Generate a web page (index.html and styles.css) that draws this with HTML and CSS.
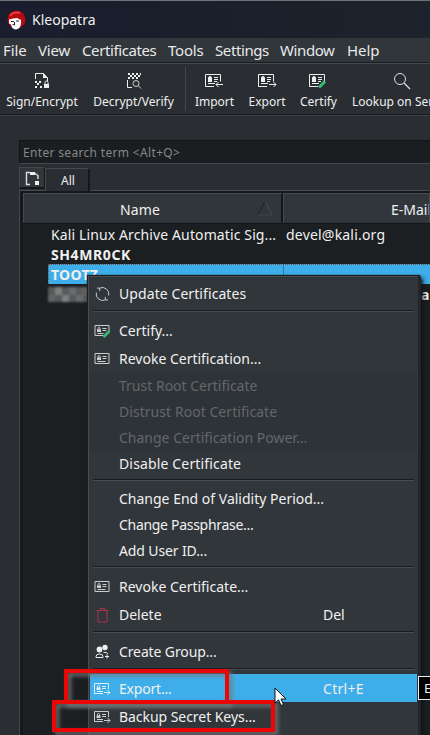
FILE: index.html
```html
<!DOCTYPE html>
<html lang="en">
<head>
<meta charset="utf-8">
<title>Kleopatra</title>
<link rel="stylesheet" href="styles.css">
</head>
<body>
<svg class="defs" width="0" height="0">
  <defs>
    <g id="card" fill="none" stroke="currentColor">
      <path d="M9 12.500H.5V.5h15v7M9 3.500h4M9 5.500h4M9 7.500h3M3 9.500h7"/>
      <path d="M3 5h4v3H3zM4 5V3h2v2" fill="currentColor" stroke="none"/>
      <path d="M3.500 5V4a1.500 1.500 0 0 1 3 0v1"/>
    </g>
    <g id="card-small" fill="none" stroke="currentColor">
      <path d="M.5.5h14v10H.5zM8 3.500h4M8 5.500h4M3 8.500h8"/>
      <path d="M2.500 4.500h4V7h-4z" fill="currentColor" stroke="none"/>
      <path d="M3.500 5V3.500a1 1 0 0 1 2 0V5"/>
    </g>
    <g id="card-open" fill="none" stroke="currentColor">
      <path d="M9 10.500H.5V.5h14V6M8 3.500h4M8 5.500h4M3 8.500h6"/>
      <path d="M2.500 4.500h4V7h-4z" fill="currentColor" stroke="none"/>
      <path d="M3.500 5V3.500a1 1 0 0 1 2 0V5"/>
    </g>
  </defs>
</svg>
<div class="window">
  <header class="titlebar">
    <svg width="20" height="20" viewBox="0 0 20 20"><circle cx="9.500" cy="9.500" r="9" fill="#b50b12"/><path d="M3 6Q6 1 13 3" stroke="#ee3a3c" stroke-width="2" fill="none"/><path d="M2 9.500q4-1.500 8-1.500l4 2v4q-1 5-5 5.500-4 0-5-5l-2-1z" fill="#fff"/><path d="M4 11.500h3m2-.5h3M7.500 12v3l-2-.5" stroke="#292023" fill="none"/></svg>
    <span class="title">Kleopatra</span>
  </header>
  <nav class="menubar"><span class="m1">File</span><span class="m2">View</span><span class="m3">Certificates</span><span class="m4">Tools</span><span class="m5">Settings</span><span class="m6">Window</span><span class="m7">Help</span></nav>
  <div class="toolbar">
    <div class="tool t1"><svg width="16" height="18" viewBox="0 0 16 18"><path d="M1.500 7V1.500h8L13.500 6v3" fill="none" stroke="#eee"/><path d="M9 1l5 5H9zM1 9h2v2H1zM5 9h2v2H5zM3 11h2v2H3zM1 14h2v2H1zM6 14h2v2H6zM10 12h5v4h-5z" fill="#eee"/><path d="M11 12v-1.500a1.500 1.500 0 0 1 3 0V12" stroke="#eee" fill="none"/></svg><span>Sign/Encrypt</span></div>
    <div class="tool t2"><svg width="16" height="18" viewBox="0 0 16 18"><path d="M2 1h2v2H2zM6 1h2v2H6zM10 1h2v2h-2zM14 1h1v2h-1zM4 3h2v2H4zM8 3h2v2H8zM12 3h2v2h-2zM2 5h2v2H2zM6 5h2v2H6zM10 5h2v2h-2z" fill="#eee"/><path d="M1.500 8v7.500H6" fill="none" stroke="#eee"/><circle cx="10" cy="11.500" r="3" fill="none" stroke="#ccc"/><path d="M12 13.500l3 3" stroke="#ccc"/></svg><span>Decrypt/Verify</span></div>
    <i class="divider"></i>
    <div class="tool t3"><svg width="19" height="18" viewBox="0 0 19 18"><use href="#card" y="2"/><path d="M18 12.500h-7M13.500 10L11 12.500l2.500 2.500" fill="none" stroke="#eee"/></svg><span>Import</span></div>
    <div class="tool t4"><svg width="19" height="18" viewBox="0 0 19 18"><use href="#card" y="2"/><path d="M11 12.500h7M15.500 10l2.500 2.500-2.500 2.500" fill="none" stroke="#eee"/></svg><span>Export</span></div>
    <div class="tool t5"><svg width="19" height="18" viewBox="0 0 19 18"><use href="#card" y="2"/><path d="M10 15.500l6-6" fill="none" stroke="#35bd78" stroke-width="3"/></svg><span>Certify</span></div>
    <div class="tool t6"><svg width="18" height="18" viewBox="0 0 18 18"><circle cx="7" cy="7" r="5.500" fill="none" stroke="#ddd"/><path d="M11 11l6 6" stroke="#ddd" stroke-width="1.200"/></svg><span>Lookup on Server</span></div>
  </div>
  <main>
    <div class="search">Enter search term &lt;Alt+Q&gt;</div>
    <div class="tabs"><div class="newtab"><svg width="16" height="16" viewBox="0 0 16 16"><path d="M5 13.500H1.500v-12H5M5 2.500h5l3 2V8" fill="none" stroke="#ddd" stroke-width="1.400"/><path d="M5 1h5v3H5zM10 10h4v4h-4z" fill="#eee"/></svg></div><div class="tab">All</div></div>
    <div class="table">
      <div class="thead"><div class="th name"><span>Name</span><svg width="16" height="16" viewBox="0 0 16 16"><path d="M8 1L1 15h14z" fill="none" stroke="#202427"/><path d="M1 15h14L8 1" fill="none" stroke="#4a4f53"/></svg></div><div class="th email"><span>E-Mail</span></div></div>
      <div class="tr"><span class="r1">Kali Linux Archive Automatic Sig...</span><span class="mail">devel@kali.org</span></div>
      <div class="tr bold"><span class="r2">SH4MR0CK</span></div>
      <div class="tr bold selected"><span class="focus"><span class="r3">TOOTZ</span></span></div>
      <div class="tr bold hidden-row"><div class="mosaic"><i></i><i></i><i></i><i></i><i></i><i></i><i></i><i></i><i></i><i></i><i></i><i></i></div><span class="tail">a</span></div>
    </div>
  </main>
</div>
<div class="menu">
  <div class="item big"><svg width="16" height="16" viewBox="0 0 16 16"><path d="M5.200 2.100A6.500 6.500 0 0 1 14.200 9.500M10.800 13.900A6.500 6.500 0 0 1 1.800 6.500M5.200 5V2.100H2.500M10.800 11v2.900h2.700" fill="none" stroke="#c5c7c8"/></svg><span class="a1">Update Certificates</span></div>
  <hr>
  <div class="item big"><svg width="16" height="16" viewBox="0 0 16 16"><use href="#card-open" y="2"/><path d="M9 14l6-6" stroke="#35bd78" stroke-width="2.500"/></svg><span class="a2">Certify...</span></div>
  <div class="item big"><svg width="16" height="16" viewBox="0 0 16 16"><use href="#card-small" y="2"/></svg><span class="a3">Revoke Certification...</span></div>
  <div class="item off"><span class="a4">Trust Root Certificate</span></div>
  <div class="item off"><span class="a5">Distrust Root Certificate</span></div>
  <div class="item off"><span class="a6">Change Certification Power...</span></div>
  <div class="item"><span class="a7">Disable Certificate</span></div>
  <hr>
  <div class="item"><span class="a8">Change End of Validity Period...</span></div>
  <div class="item"><span class="a9">Change Passphrase...</span></div>
  <div class="item"><span class="a10">Add User ID...</span></div>
  <hr>
  <div class="item big"><svg width="16" height="16" viewBox="0 0 16 16"><use href="#card-small" y="2"/></svg><span class="a11">Revoke Certificate...</span></div>
  <div class="item big"><svg width="16" height="16" viewBox="0 0 16 16"><path d="M2 3.500h12M3.500 4v11h9V4M5.500 3V1.500h5V3" fill="none" stroke="#a9354c"/></svg><span class="a12">Delete</span><kbd>Del</kbd></div>
  <hr>
  <div class="item big"><svg width="16" height="16" viewBox="0 0 16 16"><circle cx="5" cy="5.500" r="2.900" fill="#eee"/><circle cx="10.500" cy="3.500" r="2.700" fill="#eee"/><path d="M1.500 13.500v-1q0-2.500 3.500-2.500t3.500 2.500v1zM9 8.500q3-1 4.500 1.500" fill="none" stroke="#eee"/><path d="M10.500 12.500h4M12.500 10.500v4" stroke="#eee"/></svg><span class="a13">Create Group...</span></div>
  <hr class="short">
  <div class="item big active"><svg width="17" height="16" viewBox="0 0 17 16"><use href="#card-open" y="2"/><path d="M10 11.500h6M13.500 9l2.500 2.500-2.500 2.500" fill="none" stroke="currentColor"/></svg><span class="a14">Export...</span><kbd>Ctrl+E</kbd></div>
  <div class="item big backup"><svg width="17" height="16" viewBox="0 0 17 16"><use href="#card-open" y="2"/><path d="M10 11.500h6M13.500 9l2.500 2.500-2.500 2.500" fill="none" stroke="currentColor"/></svg><span class="a15">Backup Secret Keys...</span></div>
</div>
<div class="tooltip">E</div>
<div class="mark mark-export"></div>
<div class="mark mark-backup"></div>
<svg class="cursor" width="14" height="20" viewBox="0 0 14 20"><path d="M1 1v15l3.500-3.200L7 18.500l2.500-1.100L7 12h5z" fill="#fff" stroke="#111"/></svg>
</body>
</html>
```
FILE: styles.css
```css
* { box-sizing: border-box; }
body { margin: 0; width: 430px; height: 735px; overflow: hidden; position: relative; background: #2a2e33; color: #f0f0f0; font: 14px/20px "Noto Sans", sans-serif; white-space: nowrap; }
.defs { position: absolute; }
svg { display: block; flex: none; }
.window { height: 735px; display: flex; flex-direction: column; }
.titlebar { height: 38px; border-top: 1px solid #6c7477; background: linear-gradient(90deg, #191d2d, #1c202b 70%, #1c232c); display: flex; align-items: center; padding-left: 7px; gap: 5px; }
.menubar { height: 25px; background: #31363b; border-bottom: 1px solid #191c1f; display: flex; align-items: center; padding-left: 3px; font-size: 15px; letter-spacing: -.4px; color: #e8e9ea; }
.menubar span { flex: none; }
.m1 { width: 35px; letter-spacing: -.1px; } .m2 { width: 44px; letter-spacing: -.2px; } .m3 { width: 86px; } .m4 { width: 47px; letter-spacing: -.2px; } .m5 { width: 65px; } .m6 { width: 67px; } .m7 { letter-spacing: -.1px; }
.toolbar { height: 52px; border-top: 1px solid #45494d; border-bottom: 1px solid #191c1f; display: flex; align-items: stretch; padding-top: 8px; font-size: 12px; overflow: hidden; }
.tool { display: flex; flex: none; flex-direction: column; align-items: center; color: #eee; }
.tool span { line-height: 18px; margin-top: 3px; }
.t1 { width: 84px; } .t2 { width: 99px; } .divider { width: 2px; margin: -5px 0 3px 2px; background: #17191c; border-right: 1px solid #44484b; }
.t3 { width: 57px; } .t4 { width: 48px; } .t5 { width: 55px; } .t6 { width: 111px; }
main { padding: 25px 0 0 19px; flex: 1; display: flex; flex-direction: column; border-top: 1px solid #3d4246; }
.search { height: 24px; margin-top: -1px; background: #1b1e20; border: solid #121416; border-width: 1px 0 0 1px; border-bottom: 1px solid #45494d; color: #858789; padding-left: 3px; font-size: 12px; line-height: 24px; letter-spacing: .33px; }
.tabs { height: 27px; border-bottom: 1px solid #484c50; display: flex; align-items: flex-end; }
.newtab { width: 26px; height: 22px; margin-bottom: 1px; padding: 3px 5px; background: #31363b; border: 1px solid #42474b; border-right-color: #15181a; border-bottom: 2px solid #15181a; }
.tab { width: 45px; height: 23px; margin-bottom: -1px; background: #2a2e33; border: 1px solid #44494d; border-right: 2px solid #15181a; border-bottom: 0; text-align: center; font-size: 12px; line-height: 23px; padding-left: 2px; }
.table { flex: 1; background: #1b1f22; border: 2px solid #16191b; border-width: 2px 0 0 3px; margin-left: 1px; box-shadow: -1px 0 #45494d; }
.thead { height: 31px; display: flex; border-bottom: 1px solid #15181a; }
.th { height: 30px; background: #31363b; border: 1px solid #454a4e; border-bottom-color: #2c3034; display: flex; align-items: center; padding-top: 3px; }
.name { width: 260px; border-right: 2px solid #131618; }
.name span { margin-left: 96px; letter-spacing: .1px; } .name svg { margin: -4px 8px 0 auto; }
.email { flex: 1; padding-left: 107px; overflow: hidden; }
.tr { height: 20px; display: flex; padding-left: 28px; line-height: 22px; }
.r1 { width: 235px; flex: none; letter-spacing: .12px; }
.mail { letter-spacing: .2px; }
.r2 { letter-spacing: .6px; }
.r3 { letter-spacing: .3px; }
.bold { font-weight: 700; }
.selected { padding-left: 25px; }
.focus { flex: 1; background: linear-gradient(90deg, transparent 234px, #35789a 234px, #35789a 235px, transparent 235px) #3daee9; border-top: 1px dotted #75523c; border-left: 1px dotted #75523c; padding-left: 2px; line-height: 20px; }
.hidden-row { padding-left: 25px; }
.mosaic { width: 42px; height: 15px; margin-top: 3px; display: grid; grid-template-columns: repeat(6, 7px); filter: blur(1px); }
.mosaic i { background: #58595a; }
.mosaic i:nth-child(2), .mosaic i:nth-child(9) { background: #7e7f7f; }
.mosaic i:nth-child(4), .mosaic i:nth-child(11) { background: #6a6b6c; }
.mosaic i:nth-child(6), .mosaic i:nth-child(7) { background: #616263; }
.tail { margin-left: 331px; line-height: 22px; }
.menu { position: absolute; left: 88px; top: 276px; width: 333px; height: 459px; padding: 4px 1px 0 2px; background: #31363b; border: solid #22262a; border-width: 0 3px 0 0; box-shadow: inset 1px 1px #474c50, 2px 2px 4px #111, -1px -1px 1px #222; }
.item { height: 26px; display: flex; align-items: center; padding-left: 29px; background: #31363b; }
.item.big { height: 28px; padding-left: 4px; }
.item svg { width: 17px; margin-right: 8px; color: #ccc; overflow: visible; }
.item.off { color: #63676a; background: #2e3338; }
.item.active { background: #3daee9; padding-top: 1px; }
.item.active svg { color: #dff1fa; }
.item.backup { padding-top: 1px; }
.item kbd { font: inherit; margin-left: auto; width: 94px; }
.a1 { letter-spacing: .08px; } .a7 { letter-spacing: .15px; }
.a5 { letter-spacing: .05px; }
.a9 { letter-spacing: -.3px; } .a10, .a13 { letter-spacing: -.12px; } .a14 { letter-spacing: -.2px; }
.a15 { letter-spacing: -.05px; }
.a14 + kbd { letter-spacing: .3px; }
.menu hr { height: 9px; margin: 0 3px; border: 0; padding: 2px 0 5px; background: linear-gradient(#191c1f 1px, #474c50 1px) content-box; }
.menu hr.short { height: 8px; padding-bottom: 4px; }
.tooltip { position: absolute; left: 418px; top: 676px; width: 20px; height: 24px; background: #000; border: 1px solid #eee; padding-left: 5px; line-height: 22px; font-size: 13px; }
.mark { position: absolute; border: 4px solid #eb0606; filter: drop-shadow(3px 3px 2px rgba(120,120,120,.9)); }
.mark-export { left: 64px; top: 669px; width: 165px; height: 35px; }
.mark-backup { left: 52px; top: 700px; width: 223px; height: 32px; }
.cursor { position: absolute; left: 274px; top: 687px; }
```
